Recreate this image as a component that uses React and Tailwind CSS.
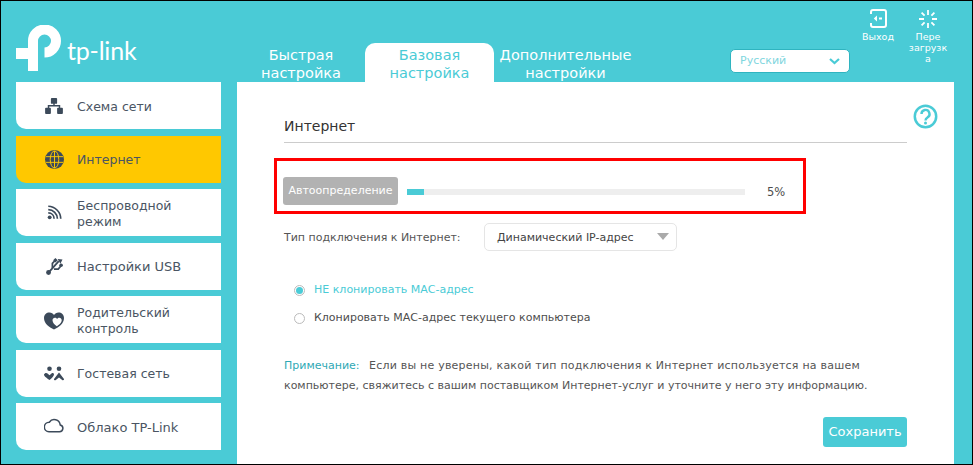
const FONT = { fontFamily: '"DejaVu Sans", Verdana, sans-serif' };

const ic = "#3c4a5a";

const Network = () => (
  <svg width="18" height="16" viewBox="0 0 20 18" fill={ic} className="mt-[1px]">
    <rect x="6.500" y="0" width="7" height="6.500" rx="1" />
    <rect x="0" y="11" width="6.500" height="7" rx="1" />
    <rect x="13.500" y="11" width="6.500" height="7" rx="1" />
    <path d="M9.200 5h1.600v3H17v4h-1.600V9.600H4.600V12H3V8h6.200z" />
  </svg>
);
const Globe = () => (
  <svg width="19" height="19" viewBox="0 0 20 20">
    <circle cx="10" cy="10" r="10" fill={ic} />
    <g fill="none" stroke="#ffc800" strokeWidth="1">
      <ellipse cx="10" cy="10" rx="4.500" ry="9" />
      <path d="M1 7h18M1 13h18M10 1v18" />
    </g>
  </svg>
);
const Wifi = () => (
  <svg width="15" height="15" viewBox="0 0 18 18" fill="none" stroke={ic} strokeWidth="2">
    <path d="M1.500 1.500C9.500 1.500 16.500 8.500 16.500 16.500" />
    <path d="M1.500 5.500C7.500 5.500 12.500 10.500 12.500 16.500" />
    <path d="M1.500 9.500C5.500 9.500 8.500 12.500 8.500 16.500" />
    <circle cx="3.200" cy="14.800" r="2.300" fill={ic} stroke="none" />
  </svg>
);
const Usb = () => (
  <svg width="17" height="17" viewBox="0 0 16 16" fill={ic}>
    <circle cx="2.400" cy="13.600" r="2.300" />
    <path d="M3 13 L12 3" stroke={ic} strokeWidth="1.700" fill="none" />
    <path d="M6 9.500 L6 5 L8.500 2.500" stroke={ic} strokeWidth="1.600" fill="none" />
    <path d="M7.500 10.500 L11.500 10.500 L14 7.500" stroke={ic} strokeWidth="1.600" fill="none" />
    <path d="M11 1l4.500 .5-2 4z" />
    <rect x="7.300" y="0.800" width="3" height="3" transform="rotate(45 9 2.300)" />
    <circle cx="14.200" cy="6.800" r="1.700" />
  </svg>
);
const Heart = () => (
  <svg width="20" height="18" viewBox="0 0 20 18" className="mt-[3px]">
    <path d="M10 17.500C5 15 0 11.500 0 6 0 2.500 2.500.5 5.500.5 7.500.5 9 1.500 10 3c1-1.500 2.500-2.500 4.500-2.500C17.500.5 20 2.500 20 6c0 5.500-5 9-10 11.500z" fill={ic} />
    <path d="M12.800 14.200c-2-1.500-4.300-3.400-4.300-6 0-1.500 1.100-2.400 2.400-2.400 1 0 1.700.5 2.200 1.300.5-.8 1.200-1.300 2.200-1.300 1.300 0 2.400.9 2.400 2.400 0 2.600-2.900 4.500-4.900 6z" fill="#fff" />
  </svg>
);
const Guests = () => (
  <svg width="20" height="15" viewBox="0 0 20 15" fill={ic}>
    <circle cx="5.500" cy="2.700" r="2.300" />
    <circle cx="15" cy="2.700" r="2.300" />
    <path d="M0 8.500C.5 7 2.500 6.500 3.500 7.500L5.500 9.200 7.500 7.500C8.700 6.500 10 7.200 10 8.500 10 10 7.500 12.500 5.500 14 3.500 12.500-.4 10 0 8.500z" />
    <path d="M15 6.500l5 6.500c.2.800-.5 1.500-1.500 1.200L15 11.500l-3.500 2.700c-1 .3-1.700-.4-1.500-1.200z" />
  </svg>
);
const Cloud = () => (
  <svg width="20" height="16" viewBox="0 0 20 16" fill="none" stroke={ic} strokeWidth="1.500" className="mb-[4px]">
    <path d="M5 14.800H15.500a3.500 3.500 0 0 0 .7-6.900A6 6 0 0 0 5.300 5.200 4.800 4.800 0 0 0 5 14.800z" />
  </svg>
);

const items = [
  [Network, "Схема сети"],
  [Globe, "Интернет", true],
  [Wifi, "Беспроводной режим"],
  [Usb, "Настройки USB", false, true],
  [Heart, "Родительский контроль"],
  [Guests, "Гостевая сеть"],
  [Cloud, "Облако TP-Link", false, true],
];

function SideItem({ Icon, label, active, wide }) {
  return (
    <div className={`h-[47px] rounded-bl-[10px] flex items-center ${active ? "bg-[#ffc800]" : "bg-white"}`}>
      <div className="w-[61px] flex justify-center pl-[15px] shrink-0">
        <Icon />
      </div>
      <div className={`leading-[16px] text-[#4a5563] w-[120px] pt-[2px] ${wide ? "text-[13px]" : "text-[12.500px]"}`}>{label}</div>
    </div>
  );
}

function Logo() {
  return (
    <div className="w-[236px] shrink-0 flex items-start pl-[15px] pt-[24px]">
      <svg width="47" height="47" viewBox="16 25 47 47" fill="none" className="shrink-0">
        <path d="M33 71V41A11.500 11.500 0 1 1 44.500 52.500" stroke="#fff" strokeWidth="10" />
        <path d="M16 53.500H38" stroke="#fff" strokeWidth="11" />
      </svg>
      <span
        className="text-white text-[25px] leading-[30px] mt-[10px] ml-[4px] font-normal tracking-[-0.2px]"
        style={{ fontFamily: 'Lato, "Open Sans", sans-serif' }}
      >
        tp-link
      </span>
    </div>
  );
}

function Tab({ children, active, className }) {
  return (
    <div
      className={`h-[39px] pt-[3px] text-center text-[14.500px] leading-[18px] overflow-hidden ${className} ${
        active ? "bg-white text-[#4acbd6] rounded-t-[10px]" : "text-white"
      }`}
    >
      {children}
    </div>
  );
}

export default function App() {
  return (
    <div
      className="w-[973px] h-[465px] border border-black bg-[#4acbd6] overflow-hidden relative flex flex-col"
      style={FONT}
    >
      <header className="h-[81px] flex shrink-0">
        <Logo />
        <div className="flex items-end">
          <Tab className="w-[128px]">Быстрая<br />настройка</Tab>
          <Tab active className="w-[129px]">Базовая<br />настройка</Tab>
          <Tab className="w-[143px]">Дополнительные<br />настройки</Tab>
        </div>
        <div className="ml-[93px] mt-[48px] w-[120px] h-[24px] bg-white rounded-[5px] border border-[#2fb4c0] flex items-center justify-between pl-[9px] pr-[9px] text-[11px] text-[#7fd6de]">
          <span className="pt-[1px]">Русский</span>
          <svg width="11" height="7" viewBox="0 0 11 7" fill="none" stroke="#4acbd6" strokeWidth="2.200">
            <path d="M1 1l4.500 4L10 1" />
          </svg>
        </div>
        <div className="ml-[8px] w-[40px] pt-[8px] flex flex-col items-center text-white text-[9.500px] leading-[11px]">
          <svg width="17" height="19" viewBox="0 0 17 19" fill="none" stroke="#fff" strokeWidth="2">
            <path d="M3 1h11a2 2 0 0 1 2 2v13a2 2 0 0 1-2 2H3a2 2 0 0 1-2-2v-2M1 5V3a2 2 0 0 1 2-2" />
            <path d="M5 9.500h2M9 9.500h3" />
            <path d="M7 6.500L3.800 9.500 7 12.500z" fill="#fff" stroke="none" />
          </svg>
          <span className="mt-[3px]">Выход</span>
        </div>
        <div className="ml-[11px] w-[38px] pt-[8px] flex flex-col items-center text-white text-[9.500px] leading-[11px]">
          <svg width="20" height="20" viewBox="0 0 20 20" fill="none" stroke="#fff" strokeWidth="1.800">
            <path d="M10 1v5M10 14v5M1 10h5M14 10h5M3.600 3.600l3 3M13.400 13.400l3 3M16.400 3.600l-3 3M6.600 13.400l-3 3" />
          </svg>
          <span className="mt-[2px] text-center whitespace-nowrap">Пере<br />загрузк<br />а</span>
        </div>
      </header>

      <div className="flex flex-1 min-h-0">
        <nav className="ml-[15px] w-[205px] flex flex-col gap-[6.500px] shrink-0">
          {items.map(([Icon, label, active, wide]) => (
            <SideItem key={label} Icon={Icon} label={label} active={active} wide={wide} />
          ))}
        </nav>

        <main className="relative ml-[16px] w-[717px] bg-white px-[47px] text-[11px] text-[#4d4d4d]">
          <svg className="absolute top-[22px] left-[676px]" width="25" height="25" viewBox="0 0 25 25" fill="none" stroke="#4acbd6" strokeWidth="2.500">
            <circle cx="12.500" cy="12.500" r="10.700" />
            <path d="M8.500 10a4 4 0 1 1 6 3.400c-1.300.8-2 1.400-2 3" strokeWidth="2.400" />
            <circle cx="12.500" cy="19" r="1.500" fill="#4acbd6" stroke="none" />
          </svg>

          <h1 className="h-[61px] pt-[35px] text-[14px] leading-[18px] font-normal text-[#333] border-b border-[#cccccc] w-[623px]">
            Интернет
          </h1>

          <div className="mt-[34px] flex items-center h-[28px] -ml-[1px]">
            <div className="w-[115px] h-[28px] bg-[#b2b2b2] rounded-[3px] text-white flex items-center justify-center text-[11px] shrink-0">
              Автоопределение
            </div>
            <div className="ml-[9px] w-[338px] h-[6px] bg-[#eeeeee] mt-[1px]">
              <div className="w-[17px] h-full bg-[#4acbd6]" />
            </div>
            <span className="ml-[22px] mt-[3px] text-[11.500px]">5%</span>
          </div>

          <div className="mt-[18px] flex items-center h-[28px]">
            <span className="w-[200px] shrink-0 text-[#555] pt-[2px]">Тип подключения к Интернет:</span>
            <div className="w-[193px] h-[28px] border border-[#e5e5e5] rounded-[5px] flex items-center justify-between pl-[12px] pr-[7px] text-[#444]">
              <span className="pt-[2px]">Динамический IP-адрес</span>
              <span className="w-0 h-0 border-l-[6px] border-r-[6px] border-t-[7px] border-l-transparent border-r-transparent border-t-[#aaaaaa] -mt-[2px]" />
            </div>
          </div>

          <div className="mt-[31px] ml-[10px] flex items-center h-[16px]">
            <span className="w-[11px] h-[11px] rounded-full border border-[#bbbbbb] flex items-center justify-center shrink-0">
              <span className="w-[7px] h-[7px] rounded-full bg-[#4acbd6]" />
            </span>
            <span className="ml-[9px] text-[#4acbd6]">НЕ клонировать МАС-адрес</span>
          </div>
          <div className="mt-[12px] ml-[10px] flex items-center h-[16px]">
            <span className="w-[11px] h-[11px] rounded-full border border-[#bbbbbb] shrink-0" />
            <span className="ml-[9px] pt-[1px]">Клонировать МАС-адрес текущего компьютера</span>
          </div>

          <p className="mt-[30px] leading-[20px] text-[#555] w-[623px]">
            <span className="text-[#2fa9b5] mr-[2px]">Примечание:</span>
            <span className="tracking-[0.22px]">&nbsp; Если вы не уверены, какой тип подключения к Интернет используется на вашем</span>{" "}
            <span>компьютере, свяжитесь с вашим поставщиком Интернет-услуг и уточните у него эту информацию.</span>
          </p>

          <div className="mt-[21px] flex justify-end w-[623px]">
            <div className="w-[84px] h-[30px] bg-[#4acbd6] rounded-[3px] text-white text-[13px] flex items-center justify-center">
              Сохранить
            </div>
          </div>
        </main>
      </div>

      <div className="absolute left-[273px] top-[157px] w-[532px] h-[56px] border-[3px] border-[#ff0000] pointer-events-none" />
    </div>
  );
}
